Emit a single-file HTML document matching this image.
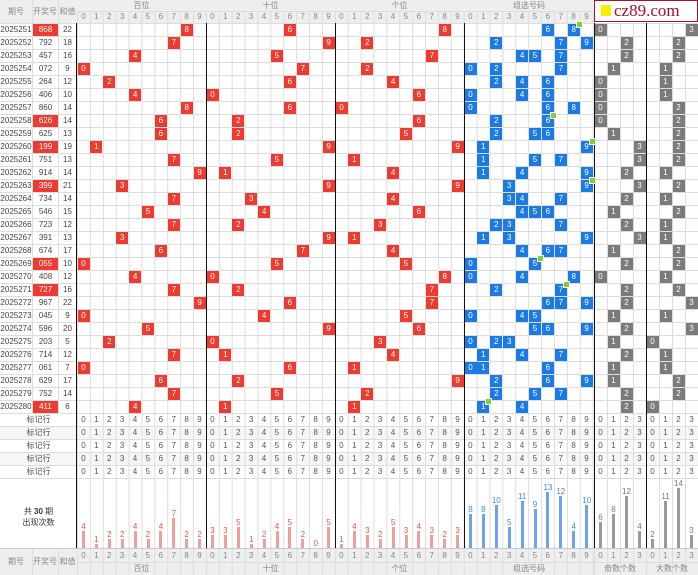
<!DOCTYPE html>
<html><head><meta charset="utf-8"><style>
*{margin:0;padding:0;box-sizing:border-box}
body{width:698px;height:575px;overflow:hidden;background:#fff;font-family:"Liberation Sans","Noto Sans CJK SC",sans-serif;font-size:8px;color:#444;position:relative}
.abs{position:absolute}
.vg{position:absolute;left:77px;top:11px;width:517px;height:564px;background-image:linear-gradient(to right,#ddd 1px,transparent 1px);background-size:12.9px 100%}
.vg2{position:absolute;left:594px;top:11px;width:104px;height:564px;background-image:linear-gradient(to right,#ddd 1px,transparent 1px);background-size:13px 100%}
.hg{position:absolute;left:0;top:23px;width:698px;height:456px;background-image:linear-gradient(to bottom,#ddd 1px,transparent 1px);background-size:100% 13px}
.bl{position:absolute;top:23px;height:525px;width:1px;background:#111}
.hd{position:absolute;background:#eee;color:#888;text-align:center}
.w{position:absolute;left:0;width:698px;height:13px;line-height:13px}
.w span{position:absolute;top:0;text-align:center;height:13px}
.a{left:0;width:32px}.n{left:33px;width:25px}.s{left:58px;width:19px}
.n.d{background:#ee3b32;color:#fff;top:1px!important;height:12px!important;line-height:12px}
i{position:absolute;top:1px;width:12px;height:12px;line-height:12px;text-align:center;color:#fff;font-style:normal;font-size:8px}
.r{background:#ee3b32}.b{background:#1c7ae5}.g{background:#7b7b7b}
.m::after{content:"";position:absolute;right:-3px;top:-3px;width:5px;height:5px;background:#8c3;border:1px solid #fff}
.x0{left:77.5px}.x1{left:90.4px}.x2{left:103.3px}.x3{left:116.2px}.x4{left:129.1px}.x5{left:142px}.x6{left:154.9px}.x7{left:167.8px}.x8{left:180.7px}.x9{left:193.6px}
.x10{left:206.5px}.x11{left:219.4px}.x12{left:232.3px}.x13{left:245.2px}.x14{left:258.1px}.x15{left:271px}.x16{left:283.9px}.x17{left:296.8px}.x18{left:309.7px}.x19{left:322.6px}
.x20{left:335.5px}.x21{left:348.4px}.x22{left:361.3px}.x23{left:374.2px}.x24{left:387.1px}.x25{left:400px}.x26{left:412.9px}.x27{left:425.8px}.x28{left:438.7px}.x29{left:451.6px}
.x30{left:464.5px}.x31{left:477.4px}.x32{left:490.3px}.x33{left:503.2px}.x34{left:516.1px}.x35{left:529px}.x36{left:541.9px}.x37{left:554.8px}.x38{left:567.7px}.x39{left:580.6px}
.o0{left:594.5px}.o1{left:607.5px}.o2{left:620.5px}.o3{left:633.5px}.q0{left:646.5px}.q1{left:659.5px}.q2{left:672.5px}.q3{left:685.5px}
.dg{position:absolute;left:0;width:698px;height:13px;line-height:13px;color:#555}
.dg .t1{position:absolute;left:81.2px;letter-spacing:8.45px;white-space:nowrap}
.dg .t2{position:absolute;left:598.3px;letter-spacing:8.55px;white-space:nowrap}
.dg .lb{position:absolute;left:0;width:77px;text-align:center}
.bc{position:absolute;bottom:27px;width:12px;display:flex;flex-direction:column;align-items:center;font-size:8px;line-height:9px}
.bc b{display:block;width:3px}
.R{color:#e5534b}.R b{background:#f19e9a}
.B{color:#4a86e0}.B b{background:#6ea2ee}
.G{color:#777}.G b{background:#9a9a9a}
</style></head><body>
<div class="hd" style="left:0;top:0;width:77px;height:23px"></div>
<div class="hd" style="left:77px;top:0;width:517px;height:23px"></div>
<div class="hd" style="left:0;top:548px;width:698px;height:27px"></div>
<div class="abs" style="left:0;top:413px;width:698px;height:65px;background:repeating-linear-gradient(to bottom,#fff 0 13px,#f6f6f6 13px 26px)"></div>
<div class="vg"></div><div class="vg2"></div><div class="hg"></div>
<div class="abs" style="left:32px;top:0;width:1px;height:413px;background:#ddd"></div>
<div class="abs" style="left:58px;top:0;width:1px;height:413px;background:#ddd"></div>
<div class="abs" style="left:32px;top:548px;width:1px;height:27px;background:#ddd"></div>
<div class="abs" style="left:58px;top:548px;width:1px;height:27px;background:#ddd"></div>
<div class="abs" style="top:11px;height:1px;background:#ddd;left:77px;width:517px"></div>
<div class="abs" style="left:0;top:548px;width:698px;height:1px;background:#ccc"></div>
<div class="abs" style="left:77px;top:562px;width:621px;height:1px;background:#ddd"></div>
<div class="bl" style="left:76px"></div><div class="bl" style="left:206px"></div><div class="bl" style="left:335px"></div><div class="bl" style="left:464px"></div><div class="bl" style="left:594px"></div><div class="bl" style="left:646px"></div>
<div class="abs" style="left:0;top:0;width:32px;line-height:23px;text-align:center;color:#888">期号</div>
<div class="abs" style="left:32px;top:0;width:26px;line-height:23px;text-align:center;color:#888">开奖号</div>
<div class="abs" style="left:58px;top:0;width:19px;line-height:23px;text-align:center;color:#888">和值</div>
<div class="abs" style="left:77px;top:0;width:129px;line-height:11px;text-align:center;color:#888">百位</div>
<div class="abs" style="left:206px;top:0;width:129px;line-height:11px;text-align:center;color:#888">十位</div>
<div class="abs" style="left:335px;top:0;width:129px;line-height:11px;text-align:center;color:#888">个位</div>
<div class="abs" style="left:464px;top:0;width:130px;line-height:11px;text-align:center;color:#888">组选号码</div>
<div class="dg" style="top:10px;color:#888"><span class="t1">0123456789012345678901234567890123456789</span></div>
<div class="abs" style="left:594px;top:0;width:104px;height:22px;background:#fff;border:1px solid #b0102a"></div>
<div class="abs" style="left:601px;top:5px;width:10px;height:11px;background:#ffee00"></div>
<div class="abs" style="left:614px;top:0;line-height:21px;font-family:'Liberation Serif',serif;font-size:17px;color:#a3102c">cz89.com</div>
<div class="w" style="top:23px"><span class="a">2025251</span><span class="n d">868</span><span class="s">22</span><i class="r x8">8</i><i class="r x16">6</i><i class="r x28">8</i><i class="b x36">6</i><i class="b x38 m">8</i><i class="g o0">0</i><i class="g q3">3</i></div>
<div class="w" style="top:36px"><span class="a">2025252</span><span class="n">792</span><span class="s">18</span><i class="r x7">7</i><i class="r x19">9</i><i class="r x22">2</i><i class="b x32">2</i><i class="b x37">7</i><i class="b x39">9</i><i class="g o2">2</i><i class="g q2">2</i></div>
<div class="w" style="top:49px"><span class="a">2025253</span><span class="n">457</span><span class="s">16</span><i class="r x4">4</i><i class="r x15">5</i><i class="r x27">7</i><i class="b x34">4</i><i class="b x35">5</i><i class="b x37">7</i><i class="g o2">2</i><i class="g q2">2</i></div>
<div class="w" style="top:62px"><span class="a">2025254</span><span class="n">072</span><span class="s">9</span><i class="r x0">0</i><i class="r x17">7</i><i class="r x22">2</i><i class="b x30">0</i><i class="b x32">2</i><i class="b x37">7</i><i class="g o1">1</i><i class="g q1">1</i></div>
<div class="w" style="top:75px"><span class="a">2025255</span><span class="n">264</span><span class="s">12</span><i class="r x2">2</i><i class="r x16">6</i><i class="r x24">4</i><i class="b x32">2</i><i class="b x34">4</i><i class="b x36">6</i><i class="g o0">0</i><i class="g q1">1</i></div>
<div class="w" style="top:88px"><span class="a">2025256</span><span class="n">406</span><span class="s">10</span><i class="r x4">4</i><i class="r x10">0</i><i class="r x26">6</i><i class="b x30">0</i><i class="b x34">4</i><i class="b x36">6</i><i class="g o0">0</i><i class="g q1">1</i></div>
<div class="w" style="top:101px"><span class="a">2025257</span><span class="n">860</span><span class="s">14</span><i class="r x8">8</i><i class="r x16">6</i><i class="r x20">0</i><i class="b x30">0</i><i class="b x36">6</i><i class="b x38">8</i><i class="g o0">0</i><i class="g q2">2</i></div>
<div class="w" style="top:114px"><span class="a">2025258</span><span class="n d">626</span><span class="s">14</span><i class="r x6">6</i><i class="r x12">2</i><i class="r x26">6</i><i class="b x32">2</i><i class="b x36 m">6</i><i class="g o0">0</i><i class="g q2">2</i></div>
<div class="w" style="top:127px"><span class="a">2025259</span><span class="n">625</span><span class="s">13</span><i class="r x6">6</i><i class="r x12">2</i><i class="r x25">5</i><i class="b x32">2</i><i class="b x35">5</i><i class="b x36">6</i><i class="g o1">1</i><i class="g q2">2</i></div>
<div class="w" style="top:140px"><span class="a">2025260</span><span class="n d">199</span><span class="s">19</span><i class="r x1">1</i><i class="r x19">9</i><i class="r x29">9</i><i class="b x31">1</i><i class="b x39 m">9</i><i class="g o3">3</i><i class="g q2">2</i></div>
<div class="w" style="top:153px"><span class="a">2025261</span><span class="n">751</span><span class="s">13</span><i class="r x7">7</i><i class="r x15">5</i><i class="r x21">1</i><i class="b x31">1</i><i class="b x35">5</i><i class="b x37">7</i><i class="g o3">3</i><i class="g q2">2</i></div>
<div class="w" style="top:166px"><span class="a">2025262</span><span class="n">914</span><span class="s">14</span><i class="r x9">9</i><i class="r x11">1</i><i class="r x24">4</i><i class="b x31">1</i><i class="b x34">4</i><i class="b x39">9</i><i class="g o2">2</i><i class="g q1">1</i></div>
<div class="w" style="top:179px"><span class="a">2025263</span><span class="n d">399</span><span class="s">21</span><i class="r x3">3</i><i class="r x19">9</i><i class="r x29">9</i><i class="b x33">3</i><i class="b x39 m">9</i><i class="g o3">3</i><i class="g q2">2</i></div>
<div class="w" style="top:192px"><span class="a">2025264</span><span class="n">734</span><span class="s">14</span><i class="r x7">7</i><i class="r x13">3</i><i class="r x24">4</i><i class="b x33">3</i><i class="b x34">4</i><i class="b x37">7</i><i class="g o2">2</i><i class="g q1">1</i></div>
<div class="w" style="top:205px"><span class="a">2025265</span><span class="n">546</span><span class="s">15</span><i class="r x5">5</i><i class="r x14">4</i><i class="r x26">6</i><i class="b x34">4</i><i class="b x35">5</i><i class="b x36">6</i><i class="g o1">1</i><i class="g q2">2</i></div>
<div class="w" style="top:218px"><span class="a">2025266</span><span class="n">723</span><span class="s">12</span><i class="r x7">7</i><i class="r x12">2</i><i class="r x23">3</i><i class="b x32">2</i><i class="b x33">3</i><i class="b x37">7</i><i class="g o2">2</i><i class="g q1">1</i></div>
<div class="w" style="top:231px"><span class="a">2025267</span><span class="n">391</span><span class="s">13</span><i class="r x3">3</i><i class="r x19">9</i><i class="r x21">1</i><i class="b x31">1</i><i class="b x33">3</i><i class="b x39">9</i><i class="g o3">3</i><i class="g q1">1</i></div>
<div class="w" style="top:244px"><span class="a">2025268</span><span class="n">674</span><span class="s">17</span><i class="r x6">6</i><i class="r x17">7</i><i class="r x24">4</i><i class="b x34">4</i><i class="b x36">6</i><i class="b x37">7</i><i class="g o1">1</i><i class="g q2">2</i></div>
<div class="w" style="top:257px"><span class="a">2025269</span><span class="n d">055</span><span class="s">10</span><i class="r x0">0</i><i class="r x15">5</i><i class="r x25">5</i><i class="b x30">0</i><i class="b x35 m">5</i><i class="g o2">2</i><i class="g q2">2</i></div>
<div class="w" style="top:270px"><span class="a">2025270</span><span class="n">408</span><span class="s">12</span><i class="r x4">4</i><i class="r x10">0</i><i class="r x28">8</i><i class="b x30">0</i><i class="b x34">4</i><i class="b x38">8</i><i class="g o0">0</i><i class="g q1">1</i></div>
<div class="w" style="top:283px"><span class="a">2025271</span><span class="n d">727</span><span class="s">16</span><i class="r x7">7</i><i class="r x12">2</i><i class="r x27">7</i><i class="b x32">2</i><i class="b x37 m">7</i><i class="g o2">2</i><i class="g q2">2</i></div>
<div class="w" style="top:296px"><span class="a">2025272</span><span class="n">967</span><span class="s">22</span><i class="r x9">9</i><i class="r x16">6</i><i class="r x27">7</i><i class="b x36">6</i><i class="b x37">7</i><i class="b x39">9</i><i class="g o2">2</i><i class="g q3">3</i></div>
<div class="w" style="top:309px"><span class="a">2025273</span><span class="n">045</span><span class="s">9</span><i class="r x0">0</i><i class="r x14">4</i><i class="r x25">5</i><i class="b x30">0</i><i class="b x34">4</i><i class="b x35">5</i><i class="g o1">1</i><i class="g q1">1</i></div>
<div class="w" style="top:322px"><span class="a">2025274</span><span class="n">596</span><span class="s">20</span><i class="r x5">5</i><i class="r x19">9</i><i class="r x26">6</i><i class="b x35">5</i><i class="b x36">6</i><i class="b x39">9</i><i class="g o2">2</i><i class="g q3">3</i></div>
<div class="w" style="top:335px"><span class="a">2025275</span><span class="n">203</span><span class="s">5</span><i class="r x2">2</i><i class="r x10">0</i><i class="r x23">3</i><i class="b x30">0</i><i class="b x32">2</i><i class="b x33">3</i><i class="g o1">1</i><i class="g q0">0</i></div>
<div class="w" style="top:348px"><span class="a">2025276</span><span class="n">714</span><span class="s">12</span><i class="r x7">7</i><i class="r x11">1</i><i class="r x24">4</i><i class="b x31">1</i><i class="b x34">4</i><i class="b x37">7</i><i class="g o2">2</i><i class="g q1">1</i></div>
<div class="w" style="top:361px"><span class="a">2025277</span><span class="n">061</span><span class="s">7</span><i class="r x0">0</i><i class="r x16">6</i><i class="r x21">1</i><i class="b x30">0</i><i class="b x31">1</i><i class="b x36">6</i><i class="g o1">1</i><i class="g q1">1</i></div>
<div class="w" style="top:374px"><span class="a">2025278</span><span class="n">629</span><span class="s">17</span><i class="r x6">6</i><i class="r x12">2</i><i class="r x29">9</i><i class="b x32">2</i><i class="b x36">6</i><i class="b x39">9</i><i class="g o1">1</i><i class="g q2">2</i></div>
<div class="w" style="top:387px"><span class="a">2025279</span><span class="n">752</span><span class="s">14</span><i class="r x7">7</i><i class="r x15">5</i><i class="r x22">2</i><i class="b x32">2</i><i class="b x35">5</i><i class="b x37">7</i><i class="g o2">2</i><i class="g q2">2</i></div>
<div class="w" style="top:400px"><span class="a">2025280</span><span class="n d">411</span><span class="s">6</span><i class="r x4">4</i><i class="r x11">1</i><i class="r x21">1</i><i class="b x31 m">1</i><i class="b x34">4</i><i class="g o2">2</i><i class="g q0">0</i></div>
<div class="dg" style="top:413px"><span class="lb">标记行</span><span class="t1">0123456789012345678901234567890123456789</span><span class="t2">01230123</span></div>
<div class="dg" style="top:426px"><span class="lb">标记行</span><span class="t1">0123456789012345678901234567890123456789</span><span class="t2">01230123</span></div>
<div class="dg" style="top:439px"><span class="lb">标记行</span><span class="t1">0123456789012345678901234567890123456789</span><span class="t2">01230123</span></div>
<div class="dg" style="top:452px"><span class="lb">标记行</span><span class="t1">0123456789012345678901234567890123456789</span><span class="t2">01230123</span></div>
<div class="dg" style="top:465px"><span class="lb">标记行</span><span class="t1">0123456789012345678901234567890123456789</span><span class="t2">01230123</span></div>
<div class="abs" style="left:0;top:506px;width:77px;text-align:center;line-height:11px;color:#333">共 <b>30</b> 期<br>出现次数</div>
<div class="bc R x0"><span>4</span><b style="height:17px"></b></div>
<div class="bc R x1"><span>1</span><b style="height:4px"></b></div>
<div class="bc R x2"><span>2</span><b style="height:9px"></b></div>
<div class="bc R x3"><span>2</span><b style="height:9px"></b></div>
<div class="bc R x4"><span>4</span><b style="height:17px"></b></div>
<div class="bc R x5"><span>2</span><b style="height:9px"></b></div>
<div class="bc R x6"><span>4</span><b style="height:17px"></b></div>
<div class="bc R x7"><span>7</span><b style="height:30px"></b></div>
<div class="bc R x8"><span>2</span><b style="height:9px"></b></div>
<div class="bc R x9"><span>2</span><b style="height:9px"></b></div>
<div class="bc R x10"><span>3</span><b style="height:13px"></b></div>
<div class="bc R x11"><span>3</span><b style="height:13px"></b></div>
<div class="bc R x12"><span>5</span><b style="height:21px"></b></div>
<div class="bc R x13"><span>1</span><b style="height:4px"></b></div>
<div class="bc R x14"><span>2</span><b style="height:9px"></b></div>
<div class="bc R x15"><span>4</span><b style="height:17px"></b></div>
<div class="bc R x16"><span>5</span><b style="height:21px"></b></div>
<div class="bc R x17"><span>2</span><b style="height:9px"></b></div>
<div class="bc R x18"><span>0</span><b style="height:0"></b></div>
<div class="bc R x19"><span>5</span><b style="height:21px"></b></div>
<div class="bc R x20"><span>1</span><b style="height:4px"></b></div>
<div class="bc R x21"><span>4</span><b style="height:17px"></b></div>
<div class="bc R x22"><span>3</span><b style="height:13px"></b></div>
<div class="bc R x23"><span>2</span><b style="height:9px"></b></div>
<div class="bc R x24"><span>5</span><b style="height:21px"></b></div>
<div class="bc R x25"><span>3</span><b style="height:13px"></b></div>
<div class="bc R x26"><span>4</span><b style="height:17px"></b></div>
<div class="bc R x27"><span>3</span><b style="height:13px"></b></div>
<div class="bc R x28"><span>2</span><b style="height:9px"></b></div>
<div class="bc R x29"><span>3</span><b style="height:13px"></b></div>
<div class="bc B x30"><span>8</span><b style="height:34px"></b></div>
<div class="bc B x31"><span>8</span><b style="height:34px"></b></div>
<div class="bc B x32"><span>10</span><b style="height:43px"></b></div>
<div class="bc B x33"><span>5</span><b style="height:21px"></b></div>
<div class="bc B x34"><span>11</span><b style="height:47px"></b></div>
<div class="bc B x35"><span>9</span><b style="height:39px"></b></div>
<div class="bc B x36"><span>13</span><b style="height:56px"></b></div>
<div class="bc B x37"><span>12</span><b style="height:52px"></b></div>
<div class="bc B x38"><span>4</span><b style="height:17px"></b></div>
<div class="bc B x39"><span>10</span><b style="height:43px"></b></div>
<div class="bc G o0"><span>6</span><b style="height:26px"></b></div>
<div class="bc G o1"><span>8</span><b style="height:34px"></b></div>
<div class="bc G o2"><span>12</span><b style="height:52px"></b></div>
<div class="bc G o3"><span>4</span><b style="height:17px"></b></div>
<div class="bc G q0"><span>2</span><b style="height:9px"></b></div>
<div class="bc G q1"><span>11</span><b style="height:47px"></b></div>
<div class="bc G q2"><span>14</span><b style="height:60px"></b></div>
<div class="bc G q3"><span>3</span><b style="height:13px"></b></div>
<div class="dg" style="top:549px;color:#888"><span class="t1">0123456789012345678901234567890123456789</span><span class="t2">01230123</span></div>
<div class="abs" style="left:0;top:548px;width:32px;line-height:27px;text-align:center;color:#888">期号</div>
<div class="abs" style="left:32px;top:548px;width:26px;line-height:27px;text-align:center;color:#888">开奖号</div>
<div class="abs" style="left:58px;top:548px;width:19px;line-height:27px;text-align:center;color:#888">和值</div>
<div class="abs" style="left:77px;top:563px;width:129px;line-height:12px;text-align:center;color:#888">百位</div>
<div class="abs" style="left:206px;top:563px;width:129px;line-height:12px;text-align:center;color:#888">十位</div>
<div class="abs" style="left:335px;top:563px;width:129px;line-height:12px;text-align:center;color:#888">个位</div>
<div class="abs" style="left:464px;top:563px;width:130px;line-height:12px;text-align:center;color:#888">组选号码</div>
<div class="abs" style="left:594px;top:563px;width:52px;line-height:12px;text-align:center;color:#888">奇数个数</div>
<div class="abs" style="left:646px;top:563px;width:52px;line-height:12px;text-align:center;color:#888">大数个数</div>
</body></html>
